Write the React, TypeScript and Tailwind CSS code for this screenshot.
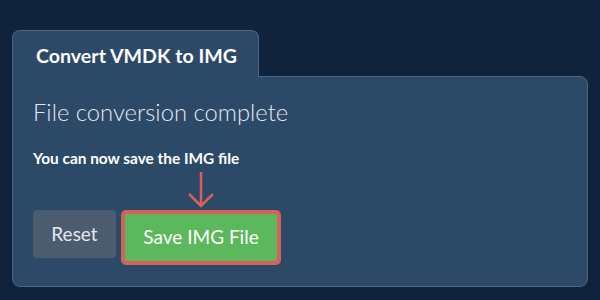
export default function App() {
  return (
    <div
      className="h-[300px] w-[600px] bg-[#10233a] pl-[12px] pr-[12px] pt-[30px]"
      style={{ fontFamily: "Lato, 'Noto Sans', sans-serif" }}
    >
      <div className="relative z-10 -mb-px flex h-[47px] w-[247px] items-center rounded-t-[8px] border border-b-0 border-[#4d6685] bg-[#2d4968] pl-[23px] pt-[4px]">
        <span className="text-[19.6px] font-bold text-white">Convert VMDK to IMG</span>
      </div>
      <div className="h-[211px] w-[576px] rounded-b-[8px] rounded-tr-[8px] border border-[#4d6685] bg-[#2d4968] pl-[20px] pt-[20px]">
        <div className="text-[23.8px] font-light leading-[30px] text-[#e2e8ef]">File conversion complete</div>
        <div className="mt-[21px] text-[15.4px] font-bold leading-[20px] text-white">You can now save the IMG file</div>
        <div className="mt-[4px] flex items-end gap-[5px]">
          <button className="mb-[7px] h-[48px] w-[83px] rounded-[4px] bg-[#4b5c6e] text-[19px] text-[#e3e8ee]">Reset</button>
          <div className="flex flex-col items-center gap-[2px]">
            <svg width="30" height="36" viewBox="0 0 30 36">
              <path d="M15 0 V34 M3 22 L15 34 L27 22" fill="none" stroke="#d9605a" strokeWidth="2.5" />
            </svg>
            <button className="h-[55px] w-[160px] rounded-[5px] border-[4px] border-[#d9605a] bg-[#5cb85c] text-[19px] text-white">
              Save IMG File
            </button>
          </div>
        </div>
      </div>
    </div>
  );
}
